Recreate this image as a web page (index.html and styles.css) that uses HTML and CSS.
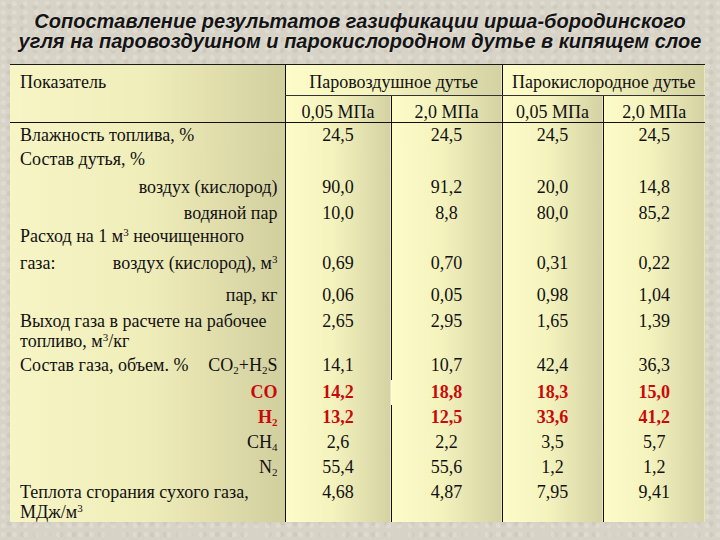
FILE: index.html
```html
<!DOCTYPE html>
<html lang="ru">
<head>
<meta charset="utf-8">
<link rel="stylesheet" href="styles.css">
</head>
<body>
<h1 class="title">Сопоставление результатов газификации ирша-бородинского<br>угля на паровоздушном и парокислородном дутье в кипящем слое</h1>
<table class="grid">
  <colgroup>
    <col class="w-label"><col class="w-c1"><col class="w-c2"><col class="w-c3"><col class="w-c4">
  </colgroup>
  <tr class="h-head1">
    <td class="lab head" rowspan="2">Показатель</td>
    <td class="grp sep line-b" colspan="2">Паровоздушное дутье</td>
    <td class="grp sep line-b" colspan="2">Парокислородное дутье</td>
  </tr>
  <tr class="h-head2">
    <td class="num sep">0,05 МПа</td>
    <td class="num sep">2,0 МПа</td>
    <td class="num sep">0,05 МПа</td>
    <td class="num sep">2,0 МПа</td>
  </tr>
  <tr class="r24 first">
    <td class="lab">Влажность топлива, %</td>
    <td class="num sep">24,5</td><td class="num sep">24,5</td><td class="num sep">24,5</td><td class="num sep">24,5</td>
  </tr>
  <tr class="r28">
    <td class="lab">Состав дутья, %</td>
    <td class="num sep"></td><td class="num sep"></td><td class="num sep"></td><td class="num sep"></td>
  </tr>
  <tr class="r26">
    <td class="lab right">воздух (кислород)</td>
    <td class="num sep">90,0</td><td class="num sep">91,2</td><td class="num sep">20,0</td><td class="num sep">14,8</td>
  </tr>
  <tr class="r23">
    <td class="lab right">водяной пар</td>
    <td class="num sep">10,0</td><td class="num sep">8,8</td><td class="num sep">80,0</td><td class="num sep">85,2</td>
  </tr>
  <tr class="r27">
    <td class="lab">Расход на 1 м<sup>3</sup> неочищенного</td>
    <td class="num sep"></td><td class="num sep"></td><td class="num sep"></td><td class="num sep"></td>
  </tr>
  <tr class="r32">
    <td class="lab"><div class="split"><span>газа:</span><span>воздух (кислород), м<sup>3</sup></span></div></td>
    <td class="num sep">0,69</td><td class="num sep">0,70</td><td class="num sep">0,31</td><td class="num sep">0,22</td>
  </tr>
  <tr class="r26">
    <td class="lab right">пар, кг</td>
    <td class="num sep">0,06</td><td class="num sep">0,05</td><td class="num sep">0,98</td><td class="num sep">1,04</td>
  </tr>
  <tr class="r44">
    <td class="lab two">Выход газа в расчете на рабочее<br>топливо, м<sup>3</sup>/кг</td>
    <td class="num sep">2,65</td><td class="num sep">2,95</td><td class="num sep">1,65</td><td class="num sep">1,39</td>
  </tr>
  <tr class="r27">
    <td class="lab"><div class="split"><span>Состав газа, объем. %</span><span>CO<sub>2</sub>+H<sub>2</sub>S</span></div></td>
    <td class="num sep">14,1</td><td class="num sep">10,7</td><td class="num sep">42,4</td><td class="num sep">36,3</td>
  </tr>
  <tr class="r25 hot">
    <td class="lab right">CO</td>
    <td class="num sep">14,2</td><td class="num sep gap">18,8</td><td class="num sep">18,3</td><td class="num sep">15,0</td>
  </tr>
  <tr class="r25 hot">
    <td class="lab right">H<sub>2</sub></td>
    <td class="num sep">13,2</td><td class="num sep">12,5</td><td class="num sep">33,6</td><td class="num sep">41,2</td>
  </tr>
  <tr class="r25">
    <td class="lab right">CH<sub>4</sub></td>
    <td class="num sep">2,6</td><td class="num sep">2,2</td><td class="num sep">3,5</td><td class="num sep">5,7</td>
  </tr>
  <tr class="r25">
    <td class="lab right">N<sub>2</sub></td>
    <td class="num sep">55,4</td><td class="num sep">55,6</td><td class="num sep">1,2</td><td class="num sep">1,2</td>
  </tr>
  <tr class="r42">
    <td class="lab two">Теплота сгорания сухого газа,<br>МДж/м<sup>3</sup></td>
    <td class="num sep">4,68</td><td class="num sep">4,87</td><td class="num sep">7,95</td><td class="num sep">9,41</td>
  </tr>
</table>
</body>
</html>
```
FILE: styles.css
```css
html, body {
  margin: 0;
  padding: 0;
}
body {
  width: 720px;
  height: 540px;
  overflow: hidden;
  background: #d8d3c7;
  background-image:
    radial-gradient(circle at 30% 40%, rgba(255,255,255,0.18) 0 2px, transparent 3px),
    radial-gradient(circle at 70% 60%, rgba(150,140,125,0.12) 0 2px, transparent 3px);
  background-size: 11px 9px, 13px 11px;
  font-family: "Liberation Serif", "Times New Roman", serif;
  color: #111;
}
.title {
  margin: 0;
  padding-top: 11px;
  height: 55px;
  box-sizing: border-box;
  text-align: center;
  font-family: "Liberation Sans", Arial, sans-serif;
  font-weight: bold;
  font-style: italic;
  font-size: 20px;
  line-height: 20px;
  color: #141414;
  text-shadow: 0 0 2px rgba(255,255,255,0.6);
}
.grid {
  margin: 9px 0 0 10px;
  width: 695px;
  table-layout: fixed;
  border-collapse: collapse;
  border-top: 1px solid #1a1a1a;
  font-family: "Liberation Serif", "Times New Roman", serif;
  font-size: 18px;
  line-height: 18px;
}
.w-label { width: 275px; }
.w-c1 { width: 106px; }
.w-c2 { width: 111px; }
.w-c3 { width: 101px; }
.w-c4 { width: 102px; }
.grid td {
  padding: 3px 0 0;
  vertical-align: top;
  background: linear-gradient(to right, #fdfcc9 0%, #f4f2bd 45%, #d4d2a2 100%);
  white-space: nowrap;
}
.grid td.lab {
  padding-left: 10px;
  padding-right: 7px;
  background: linear-gradient(to right, #f7f5c5 0%, #efedb9 50%, #d2cf9f 100%);
}
.grid td.two { line-height: 20px; padding-top: 2px; }
.grid td.right { text-align: right; }
.grid td.num { text-align: center; }
.grid td.sep { border-left: 1px solid #111; }
.grid td.gap { border-left-color: #fbfbe6; }
.grid td.grp { text-align: center; padding-top: 8px; }
.grid td.line-b { border-bottom: 1px solid #333; }
.grid td.head { padding-top: 8px; border-bottom: 1px solid #111; }
.h-head1 { height: 31px; }
.h-head2 { height: 27px; }
.h-head2 td { padding-top: 7px; border-bottom: 1px solid #111; }
.split {
  display: flex;
  justify-content: space-between;
}
sup { font-size: 11px; line-height: 0; vertical-align: 6px; }
sub { font-size: 11px; line-height: 0; vertical-align: -3px; }
.hot td { color: #c80a0a; font-weight: bold; }
.r23 { height: 23px; }
.r24 { height: 24px; }
.r25 { height: 25px; }
.r26 { height: 26px; }
.r27 { height: 27px; }
.r28 { height: 28px; }
.r32 { height: 32px; }
.r42 { height: 42px; }
.r44 { height: 44px; }
```
